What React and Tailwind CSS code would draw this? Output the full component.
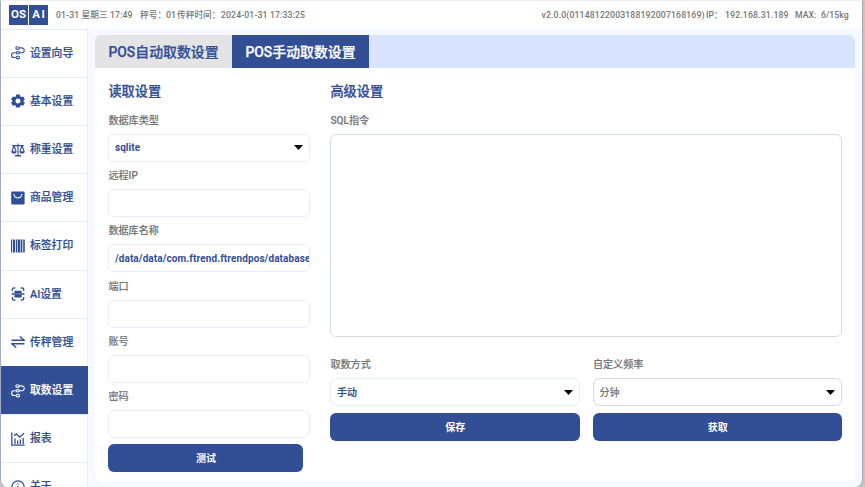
import React from "react";

const iconClass = "w-[14px] h-[14px] flex-shrink-0";

const RouteIcon = () => (
  <svg className={iconClass} viewBox="0 0 14 14" fill="none" stroke="currentColor" strokeWidth="1.1" strokeLinecap="round">
    <ellipse cx="6.6" cy="2.1" rx="1.8" ry="1.3" />
    <ellipse cx="6.8" cy="6.8" rx="1.8" ry="1.2" />
    <ellipse cx="6.8" cy="11.6" rx="1.8" ry="1.3" />
    <path d="M9.2 1.9h1.6a2.4 2.4 0 0 1 0 4.9h-1.4M4.3 6.8H3a2.3 2.3 0 0 0 0 4.7h1.2" />
  </svg>
);

const GearIcon = () => (
  <svg className={iconClass} viewBox="0 0 14 14" fill="currentColor" fillRule="evenodd">
    <path d="M5.2.5h3.6l.5 1.9 1.1.6 1.8-.6 1.7 3-1.4 1.3v.8l1.4 1.3-1.7 3-1.8-.6-1.1.6-.5 1.7H5.2l-.5-1.7-1.1-.6-1.8.6-1.7-3 1.4-1.3v-.8L.1 5.4l1.7-3 1.8.6 1.1-.6zM7 4.5a2.5 2.5 0 1 0 0 5 2.5 2.5 0 0 0 0-5z" />
  </svg>
);

const ScaleIcon = () => (
  <svg className={iconClass} viewBox="0 0 14 14" fill="none" stroke="currentColor" strokeWidth="1.1">
    <path d="M7 .6v12M1.2 2.6h11.6M3 2.8L.9 8.5M3 2.8l2.1 5.7M11 2.8L8.9 8.5M11 2.8l2.1 5.7" />
    <path strokeWidth="1.5" d="M4 12.8h6" />
    <path fill="currentColor" stroke="none" d="M.2 8.2h5.4a2.7 2.4 0 0 1-5.4 0zM8.4 8.2h5.4a2.7 2.4 0 0 1-5.4 0z" />
  </svg>
);

const BagIcon = () => (
  <svg className={iconClass} viewBox="0 0 14 14">
    <rect x=".2" y=".4" width="13.4" height="13.2" rx="1" fill="currentColor" />
    <path d="M3 3.4c.6 4.6 7.2 4.6 7.8 0" fill="none" stroke="#dfe6f8" strokeWidth="1.2" strokeLinecap="round" />
  </svg>
);

const BarcodeIcon = () => (
  <svg className={iconClass} viewBox="0 0 14 14" fill="currentColor">
    <path d="M0 .4h1.2v13.2H0zM2 .4h2v13.2H2zM4.8 .4h1.4v13.2H4.8zM6.8 .4h2.2v13.2H6.8zM9.6 .4h1.8v13.2H9.6zM12.2 .4h1.6v13.2h-1.6z" />
  </svg>
);

const ScanIcon = () => (
  <svg className={iconClass} viewBox="0 0 14 14" fill="none" stroke="currentColor" strokeWidth="1.3">
    <path d="M1.3 4V2.4a1.4 1.4 0 0 1 1.4-1.4h1.5M9.8 1h1.5a1.4 1.4 0 0 1 1.4 1.4V4M12.7 10v1.6a1.4 1.4 0 0 1-1.4 1.4H9.8M4.2 13H2.7a1.4 1.4 0 0 1-1.4-1.4V10M.5 7h13" />
    <path fill="currentColor" stroke="none" d="M3.4 3.7h7.2v2.6H3.4zM3.4 7.7h7.2v2.7H3.4z" />
  </svg>
);

const TransferIcon = () => (
  <svg className={iconClass} viewBox="0 0 14 14" fill="none" stroke="currentColor" strokeWidth="1.4">
    <path d="M.6 5.3h12.6L8.8 1.4M13.4 8.8H.9l4.3 4" />
  </svg>
);

const ReportIcon = () => (
  <svg className={iconClass} viewBox="0 0 14 14" fill="none" stroke="currentColor" strokeWidth="1.3">
    <path d="M.8.5v12.7h12.8M4 12V6.6M6.7 12V8.6M9.4 12V7.4M12.2 12V6M3 3.6l2.5-1.8 3 3.4 4.6-4" />
  </svg>
);

const InfoIcon = () => (
  <svg className={iconClass} viewBox="0 0 14 14" fill="none" stroke="currentColor" strokeWidth="1.3">
    <circle cx="7" cy="7" r="6.2" />
    <path d="M7 3.2v1.4M7 6v4.6" />
  </svg>
);

const menu = [
  { label: "设置向导", Icon: RouteIcon },
  { label: "基本设置", Icon: GearIcon },
  { label: "称重设置", Icon: ScaleIcon },
  { label: "商品管理", Icon: BagIcon },
  { label: "标签打印", Icon: BarcodeIcon },
  { label: "AI设置", Icon: ScanIcon },
  { label: "传秤管理", Icon: TransferIcon },
  { label: "取数设置", Icon: RouteIcon, active: true },
  { label: "报表", Icon: ReportIcon },
  { label: "关于", Icon: InfoIcon },
];

const Header = () => (
  <header className="flex h-[27px] flex-shrink-0 items-center bg-white pl-2 pr-[13px] text-[8.7px] font-medium text-[#777777] whitespace-pre">
    <div className="flex h-5 w-[39px] flex-shrink-0 gap-px text-[11.5px] font-bold text-white">
      <span className="flex w-[19px] items-center justify-center bg-[#324e94]">OS</span>
      <span className="flex w-[19px] items-center justify-center bg-[#324e94] pl-[1.5px] tracking-[1.5px]">AI</span>
    </div>
    <span className="mt-[2px] ml-2 w-[84px] tracking-[0.1px]">01-31 星期三 17:49</span>
    <span className="mt-[2px] w-[37px]">秤号：01</span>
    <span className="mt-[2px] w-[44px]">传秤时间：</span>
    <span className="mt-[2px] tracking-[0.12px]">2024-01-31 17:33:25</span>
    <span className="mt-[2px] ml-auto w-[164.5px] tracking-[0.14px]">v2.0.0(01148122003188192007168169)</span>
    <span className="mt-[2px] w-[19px]">IP：</span>
    <span className="mt-[2px] w-[70px] tracking-[0.15px]">192.168.31.189</span>
    <span className="mt-[2px] w-[26px]">MAX:</span>
    <span className="mt-[2px] w-[28px]">6/15kg</span>
  </header>
);

const Sidebar = () => (
  <nav className="w-[87px] flex-shrink-0 border-r border-[#e6eef8] bg-white pt-[0.6px]">
    {menu.map(({ label, Icon, active }) => (
      <div
        key={label}
        className={`flex h-[48.2px] items-center gap-[5px] border-t pl-[10px] text-[10.8px] font-medium [-webkit-text-stroke:0.2px] ${
          active ? "-mr-px border-[#324e94] bg-[#324e94] text-white" : "border-[#e3edf6] text-[#324e94]"
        }`}
      >
        <Icon />
        <span className="pt-[1px]">{label}</span>
      </div>
    ))}
  </nav>
);

const Label = ({ children }) => (
  <div className="h-[14px] text-[10.1px] leading-[14px] font-medium text-[#777777] [-webkit-text-stroke:0.15px]">{children}</div>
);

const Caret = () => (
  <svg className="ml-auto h-[5px] w-[9px] flex-shrink-0" viewBox="0 0 9 5">
    <path d="M0 0h9L4.5 5z" fill="#000" />
  </svg>
);

const Box = ({ children, className = "border-[#e8eef3] text-[#324e94]" }) => (
  <div className={`flex h-7 items-center overflow-hidden rounded-md border bg-white pl-[5.5px] text-[10px] whitespace-nowrap ${className}`}>
    {children}
  </div>
);

const Button = ({ children, className = "" }) => (
  <button className={`flex h-7 items-center justify-center rounded-md bg-[#324e94] text-[10px] font-bold text-white ${className}`}>
    {children}
  </button>
);

const Title = ({ children }) => (
  <h2 className="h-[18px] text-[13.2px] leading-[18px] font-medium text-[#324e94] [-webkit-text-stroke:0.25px]">{children}</h2>
);

const fields = [
  { label: "数据库类型", value: "sqlite", select: true },
  { label: "远程IP" },
  { label: "数据库名称", value: "/data/data/com.ftrend.ftrendpos/database" },
  { label: "端口" },
  { label: "账号" },
  { label: "密码" },
];

const App = () => (
  <div className="flex h-[487px] w-[865px] overflow-hidden bg-[#c4c4c6] font-[Roboto,'Noto_Sans_CJK_SC',sans-serif]">
    <div className="flex w-[863px] flex-col overflow-hidden rounded-b-lg border-t border-r border-l border-t-[#eeeeee] border-r-[#a9abb0] border-l-[#a3abc2] bg-[#f6f9ff]">
      <Header />
      <div className="flex min-h-0 flex-1">
        <Sidebar />
        <main className="flex-1 pt-[7px] pr-[6.6px] pb-[7px] pl-[7px]">
          <div className="h-[446px] overflow-hidden rounded-md bg-white">
            {/* Tabs */}
            <div className="flex h-[33.4px] bg-[#d9e5ff] text-[13.9px] font-medium [-webkit-text-stroke:0.25px]">
              <div className="flex w-[137px] items-center justify-center bg-[#e4e4e4] pt-px text-[#324e94]">POS自动取数设置</div>
              <div className="flex w-[137px] items-center justify-center bg-[#324e94] pt-px text-white">POS手动取数设置</div>
            </div>

            <div className="flex pt-[14.6px] pl-[13.4px]">
              {/* Conexión */}
              <section className="w-[202px]">
                <Title>读取设置</Title>
                <div className="pt-[13px]">
                  {fields.map(({ label, value, select }) => (
                    <div key={label} className="h-[55.2px]">
                      <Label>{label}</Label>
                      <div className="pt-[6px]">
                        <Box>
                          <span className="font-bold tracking-[0.1px]">{value}</span>
                          {select && <span className="ml-auto pr-[6px]"><Caret /></span>}
                        </Box>
                      </div>
                    </div>
                  ))}
                </div>
                <Button className="-mt-[1px] w-[195px]">测试</Button>
              </section>

              {/* Avanzado */}
              <section className="ml-5 w-[512px]">
                <Title>高级设置</Title>
                <div className="pt-[13px]">
                  <Label>SQL指令</Label>
                </div>
                <div className="mt-[6px] h-[203.5px] rounded-md border border-[#d5dde0] bg-white" />
                <div className="mt-[21px] grid grid-cols-2 gap-x-[13px]">
                  <div>
                    <Label>取数方式</Label>
                    <Box className="mt-[6px] border-[#e8eff9] pr-[6px] font-medium text-[#324e94] [-webkit-text-stroke:0.2px]">
                      手动
                      <Caret />
                    </Box>
                    <Button className="mt-[7px] w-full">保存</Button>
                  </div>
                  <div>
                    <Label>自定义频率</Label>
                    <Box className="mt-[6px] border-[#d8d8d8] pr-[6px] font-medium text-[#777777] [-webkit-text-stroke:0.1px]">
                      分钟
                      <Caret />
                    </Box>
                    <Button className="mt-[7px] w-full">获取</Button>
                  </div>
                </div>
              </section>
            </div>
          </div>
        </main>
      </div>
    </div>
  </div>
);

export default App;
